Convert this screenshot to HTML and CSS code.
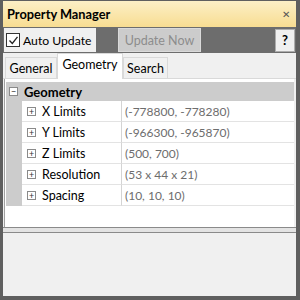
FILE: index.html
```html
<!DOCTYPE html>
<html lang="en">
<head>
    <meta charset="UTF-8">
    <title>Property Manager</title>
    <link rel="stylesheet" href="styles.css">
</head>
<body>
    <div class="window">
        <div class="titlebar">
            <span class="title">Property Manager</span>
            <span class="close">&#x2715;</span>
        </div>
        <div class="toolbar">
            <label class="auto">
                <span class="check">
                    <svg width="11" height="11" viewBox="0 0 11 11"><path d="M1.5 5.5 L4.3 8.5 L9.5 1.8" fill="none" stroke="#222" stroke-width="1.3"/></svg>
                </span>
                Auto Update
            </label>
            <button class="btn-update" disabled>Update Now</button>
            <button class="btn-help">?</button>
        </div>
        <div class="tabs">
            <div class="tab tab-general">General</div>
            <div class="tab tab-geometry active">Geometry</div>
            <div class="tab tab-search">Search</div>
        </div>
        <div class="grid">
            <div class="category">
                <span class="box">&minus;</span>
                <span class="cat-name">Geometry</span>
            </div>
            <div class="row">
                <div class="margin"></div>
                <div class="name"><span class="box">+</span>X Limits</div>
                <div class="value">(-778800, -778280)</div>
            </div>
            <div class="row">
                <div class="margin"></div>
                <div class="name"><span class="box">+</span>Y Limits</div>
                <div class="value">(-966300, -965870)</div>
            </div>
            <div class="row">
                <div class="margin"></div>
                <div class="name"><span class="box">+</span>Z Limits</div>
                <div class="value">(500, 700)</div>
            </div>
            <div class="row">
                <div class="margin"></div>
                <div class="name"><span class="box">+</span>Resolution</div>
                <div class="value">(53 x 44 x 21)</div>
            </div>
            <div class="row">
                <div class="margin"></div>
                <div class="name"><span class="box">+</span>Spacing</div>
                <div class="value">(10, 10, 10)</div>
            </div>
        </div>
        <div class="splitter"></div>
        <div class="help"></div>
    </div>
</body>
</html>
```

FILE: styles.css
```css
body {
    margin: 0;
    font-family: Lato, "Liberation Sans", sans-serif;
    font-size: 12px;
    color: #000;
    white-space: nowrap;
}
.window {
    width: 300px;
    height: 300px;
    box-sizing: border-box;
    border: 3px solid #5f5f5f;
    border-top-width: 1px;
    border-right-width: 4px;
    border-bottom-width: 4px;
    display: flex;
    flex-direction: column;
    background: #6d6d6d;
}
.titlebar {
    height: 26px;
    flex: none;
    display: flex;
    align-items: center;
    justify-content: space-between;
    padding: 0 6px 0 4px;
    background: linear-gradient(#fcefc6, #f8dd92);
}
.title {
    font-weight: bold;
    font-size: 12.8px;
}
.close {
    font-size: 10px;
    color: #555;
}
.toolbar {
    height: 26px;
    flex: none;
    display: flex;
    align-items: center;
    background: #6d6d6d;
}
.auto {
    margin-left: 1px;
    width: 92px;
    height: 24px;
    box-sizing: border-box;
    background: #f0f0f0;
    display: flex;
    align-items: center;
    gap: 3px;
    padding-left: 2px;
    font-size: 12.2px;
}
.check {
    width: 12px;
    height: 12px;
    border: 1px solid #333;
    background: #fff;
    display: flex;
    align-items: center;
    justify-content: center;
}
.btn-update {
    margin-left: 22px;
    width: 83px;
    height: 24px;
    border: 1px solid #dadada;
    background: #cccccc;
    color: #8d8d8d;
    font: inherit;
    font-size: 12.5px;
    padding: 0;
}
.btn-help {
    margin-left: auto;
    margin-right: 1px;
    width: 20px;
    height: 23px;
    border: 1px solid #adadad;
    background: #f0f0f0;
    font: inherit;
    font-size: 13px;
    font-weight: bold;
    padding: 0;
}
.tabs {
    height: 25px;
    flex: none;
    display: flex;
    align-items: flex-end;
    background: #f0f0f0;
    padding-left: 2px;
    border-bottom: 1px solid #d9d9d9;
}
.tab {
    height: 21px;
    box-sizing: border-box;
    border: 1px solid #d9d9d9;
    border-bottom: none;
    padding-top: 3px;
    text-align: center;
    font-size: 12.5px;
}
.tab-general {
    width: 52px;
}
.tab-geometry {
    width: 66px;
}
.tab-search {
    width: 45px;
}
.tab.active {
    height: 26px;
    background: #fff;
    padding-top: 3px;
    position: relative;
    top: 1px;
    border-bottom: none;
}
.grid {
    flex: 1;
    background: #fff;
    border-left: 1px solid #f0f0f0;
    border-right: 2px solid #f0f0f0;
    padding: 3px 0 0 2px;
    box-shadow: inset 1px 0 #a0a0a0;
}
.category {
    height: 19px;
    background: #cccccc;
    display: flex;
    align-items: center;
    padding-left: 3px;
}
.cat-name {
    font-weight: bold;
    font-size: 13px;
    margin-left: 6px;
}
.box {
    width: 7px;
    height: 7px;
    border: 1px solid #8a8a8a;
    background: #fff;
    font-size: 9px;
    line-height: 7px;
    text-align: center;
    color: #333;
    display: inline-block;
    flex: none;
}
.row {
    height: 21px;
    display: flex;
}
.margin {
    width: 16px;
    background: #cccccc;
    flex: none;
}
.name {
    width: 100px;
    box-sizing: border-box;
    border-bottom: 1px solid #e3e3e3;
    border-right: 1px solid #d4d4d4;
    display: flex;
    align-items: center;
    gap: 6px;
    padding-left: 5px;
    font-size: 12.5px;
}
.value {
    flex: 1;
    border-bottom: 1px solid #e3e3e3;
    display: flex;
    align-items: center;
    padding-left: 3px;
    color: #6d6d6d;
}
.splitter {
    height: 4px;
    flex: none;
    background: #e3e3e3;
    border-top: 1px solid #8a8a8a;
    border-bottom: 1px solid #8a8a8a;
}
.help {
    height: 63px;
    flex: none;
    background: #f0f0f0;
    border-left: 1px solid #f0f0f0;
}
```
